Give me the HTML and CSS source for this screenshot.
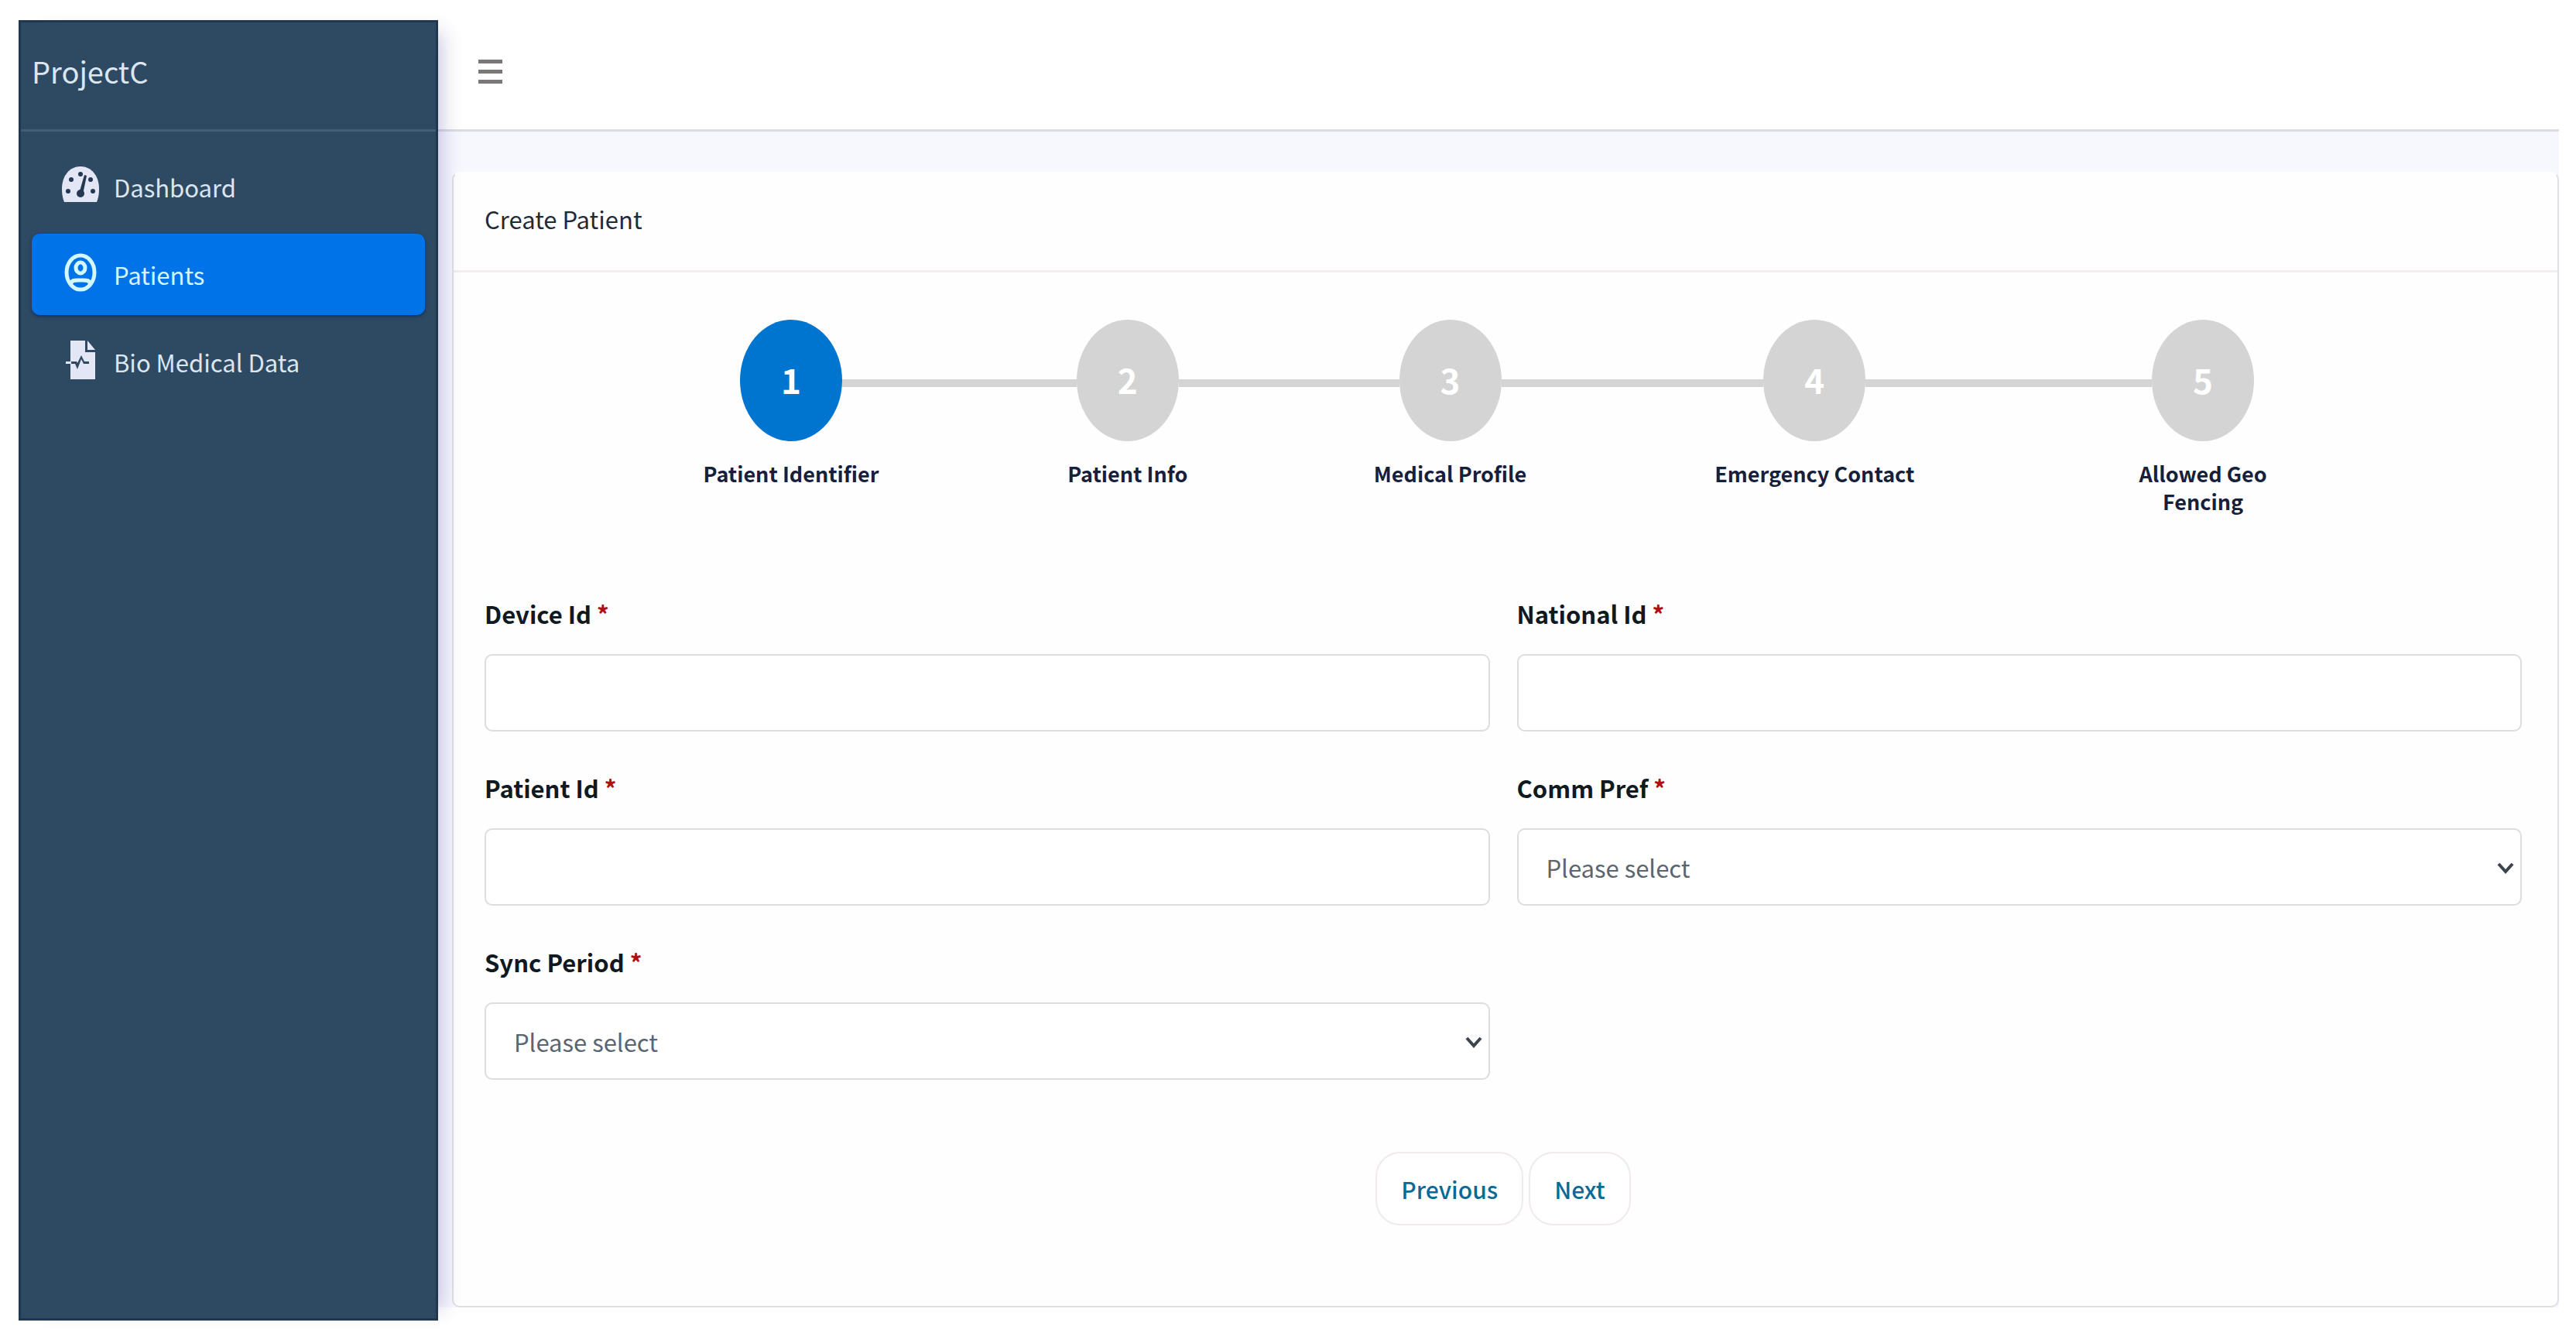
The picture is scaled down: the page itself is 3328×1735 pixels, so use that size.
FILE: index.html
```html
<!DOCTYPE html>
<html lang="en">
<head>
    <meta charset="UTF-8">
    <meta name="viewport" content="width=device-width, initial-scale=1.0">
    <title>ProjectC - Create Patient</title>
    <link rel="stylesheet" href="styles.css">
</head>
<body>
    <div class="wrapper">
        <aside class="sidebar">
            <a href="#" class="brand">ProjectC</a>
            <nav class="menu">
                <a href="#" class="menu-item">
                    <svg class="icon" viewBox="0 0 50 50" preserveAspectRatio="none" aria-hidden="true">
                        <path fill="#e3e6f5" d="M4 47C2 42 1 37 1 30C1 13 11 1 25 1s24 12 24 29c0 7-1 12-3 17z"/>
                        <g fill="#24384f">
                            <circle cx="25" cy="11" r="3"/>
                            <circle cx="13" cy="18" r="3"/>
                            <circle cx="38" cy="18" r="3"/>
                            <circle cx="9" cy="33" r="3"/>
                            <circle cx="41" cy="33" r="3"/>
                            <circle cx="25" cy="36" r="5"/>
                            <path d="M30 12l3 1-5 24-5-1z"/>
                        </g>
                    </svg>
                    <span>Dashboard</span>
                </a>
                <a href="#" class="menu-item active">
                    <svg class="icon" viewBox="0 0 50 50" preserveAspectRatio="none" aria-hidden="true">
                        <g fill="none" stroke="#d4f8ff" stroke-width="5">
                            <ellipse cx="25" cy="25" rx="18" ry="22"/>
                            <ellipse cx="25" cy="19" rx="6" ry="7"/>
                            <path d="M12 41c2-7 5-6 13-6s11-1 13 6"/>
                        </g>
                    </svg>
                    <span>Patients</span>
                </a>
                <a href="#" class="menu-item">
                    <svg class="icon" viewBox="0 0 50 50" preserveAspectRatio="none" aria-hidden="true">
                        <path fill="#e3e6f5" d="M12 0h19v15h13v35H12V30h6l3 7 5-13 3 6h7v-3h-6l-4-8-5 10-1-2h-8z"/>
                        <path fill="#e3e6f5" d="M34 0l10 12H34zM6 27h7v3H6z"/>
                    </svg>
                    <span>Bio Medical Data</span>
                </a>
            </nav>
        </aside>

        <div class="main">
            <header class="navbar">
                <button type="button" class="toggle" aria-label="Toggle menu">
                    <span></span>
                    <span></span>
                    <span></span>
                </button>
            </header>

            <main class="content">
                <section class="card">
                    <h1 class="card-header">Create Patient</h1>
                    <form class="card-body">
                        <div class="stepper">
                            <div class="step active">
                                <div class="circle">1</div>
                                <div class="step-label">Patient Identifier</div>
                            </div>
                            <div class="line line-1"></div>
                            <div class="step">
                                <div class="circle">2</div>
                                <div class="step-label">Patient Info</div>
                            </div>
                            <div class="line line-2"></div>
                            <div class="step">
                                <div class="circle">3</div>
                                <div class="step-label">Medical Profile</div>
                            </div>
                            <div class="line line-3"></div>
                            <div class="step">
                                <div class="circle">4</div>
                                <div class="step-label">Emergency Contact</div>
                            </div>
                            <div class="line line-4"></div>
                            <div class="step">
                                <div class="circle">5</div>
                                <div class="step-label">Allowed Geo<br>Fencing</div>
                            </div>
                        </div>

                        <div class="fields">
                            <div class="form-group">
                                <label for="device-id">Device Id <span class="required">*</span></label>
                                <input type="text" id="device-id" class="control">
                            </div>
                            <div class="form-group">
                                <label for="national-id">National Id <span class="required">*</span></label>
                                <input type="text" id="national-id" class="control">
                            </div>
                            <div class="form-group">
                                <label for="patient-id">Patient Id <span class="required">*</span></label>
                                <input type="text" id="patient-id" class="control">
                            </div>
                            <div class="form-group">
                                <label for="comm-pref">Comm Pref <span class="required">*</span></label>
                                <div class="select-box">
                                    <select id="comm-pref" class="control">
                                        <option>Please select</option>
                                    </select>
                                    <svg class="chevron" viewBox="0 0 22 16" aria-hidden="true"><path d="M2 2l9 10 9-10"/></svg>
                                </div>
                            </div>
                            <div class="form-group">
                                <label for="sync-period">Sync Period <span class="required">*</span></label>
                                <div class="select-box">
                                    <select id="sync-period" class="control">
                                        <option>Please select</option>
                                    </select>
                                    <svg class="chevron" viewBox="0 0 22 16" aria-hidden="true"><path d="M2 2l9 10 9-10"/></svg>
                                </div>
                            </div>
                        </div>

                        <div class="actions">
                            <button type="button" class="btn">Previous</button>
                            <button type="button" class="btn">Next</button>
                        </div>
                    </form>
                </section>
            </main>
        </div>
    </div>
</body>
</html>
```

FILE: styles.css
```css
* {
    box-sizing: border-box;
}
body {
    margin: 0;
    background-color: #fff;
    color: #1f2a37;
    font-family: "Noto Sans CJK SC", "Noto Sans", sans-serif;
    font-size: 31px;
    line-height: 40px;
}
.wrapper {
    display: flex;
    min-height: 100vh;
    padding: 26px 22px 29px 24px;
}

/* Sidebar */
.sidebar {
    position: relative;
    z-index: 1;
    width: 542px;
    flex-shrink: 0;
    background-color: #2e4a62;
    border: 3px solid #1f3850;
    box-shadow: 20px 0 24px -16px rgba(60, 60, 150, 0.3);
}
.brand {
    display: flex;
    align-items: center;
    height: 141px;
    padding: 0 14px 12px;
    border-bottom: 3px solid #435d76;
    color: #dbe6f2;
    font-size: 38px;
    text-decoration: none;
}
.menu {
    display: flex;
    flex-direction: column;
    gap: 8px;
    padding: 19px 14px;
}
.menu-item {
    display: flex;
    align-items: center;
    gap: 18px;
    height: 105px;
    padding: 0 38px;
    border-radius: 10px;
    color: #dbe6f2;
    text-decoration: none;
}
.menu-item.active {
    background-color: #0073e9;
    color: #d4f8ff;
    box-shadow: 0 2px 4px rgba(0, 20, 80, 0.5);
}
.icon {
    width: 50px;
    height: 50px;
    margin-bottom: 6px;
}

/* Top bar */
.main {
    flex: 1;
    display: flex;
    flex-direction: column;
    min-width: 0;
    padding-bottom: 17px;
}
.navbar {
    display: flex;
    align-items: center;
    height: 144px;
    padding: 0 52px;
    border-bottom: 3px solid #dcdce4;
}
.toggle {
    display: flex;
    flex-direction: column;
    gap: 8px;
    padding: 0;
    margin-bottom: 8px;
    border: none;
    background: none;
    cursor: pointer;
}
.toggle span {
    width: 31px;
    height: 5px;
    background-color: #7b7777;
}

/* Card */
.content {
    flex: 1;
    display: flex;
    padding: 52px 0 0 18px;
    background-color: #f7f7fe;
}
.card {
    flex: 1;
    background-color: #fefefe;
    border: 2px solid #dfdfe5;
    border-top-color: #fefefe;
    border-radius: 10px;
}
.card-header {
    display: flex;
    align-items: center;
    height: 128px;
    margin: 0;
    padding: 0 40px 8px;
    border-bottom: 3px solid #f1edf0;
    font-size: 31px;
    font-weight: 400;
}
.card-body {
    padding: 61px 46px 80px 40px;
}

/* Stepper */
.stepper {
    display: flex;
    padding: 0 346px 0 330px;
}
.step {
    display: flex;
    flex-direction: column;
    align-items: center;
    width: 132px;
    flex-shrink: 0;
}
.circle {
    display: flex;
    align-items: center;
    justify-content: center;
    width: 132px;
    height: 157px;
    padding-bottom: 4px;
    border-radius: 50%;
    background-color: #d4d4d4;
    color: #fff;
    font-size: 44px;
    font-weight: 700;
}
.step.active .circle {
    background-color: #0075cf;
}
.step-label {
    margin-top: 24px;
    color: #16203a;
    font-size: 27px;
    font-weight: 700;
    line-height: 36px;
    text-align: center;
    white-space: nowrap;
}
.line {
    height: 10px;
    margin-top: 77px;
    background-color: #d4d4d4;
}
.line-1 {
    flex: 303;
}
.line-2 {
    flex: 285;
}
.line-3 {
    flex: 339;
}
.line-4 {
    flex: 370;
}

/* Form */
.fields {
    display: grid;
    grid-template-columns: 1fr 1fr;
    gap: 53px 35px;
    margin-top: 107px;
}
label {
    display: block;
    margin-bottom: 32px;
    color: #101820;
    font-weight: 700;
}
.required {
    color: #b01010;
}
.control {
    display: block;
    width: 100%;
    height: 100px;
    padding: 0 36px;
    border: 2px solid #dcdddf;
    border-radius: 10px;
    background-color: #fff;
    color: #5b6570;
    font-family: inherit;
    font-size: 31px;
    appearance: none;
}
.select-box {
    position: relative;
}
.chevron {
    position: absolute;
    top: 44px;
    right: 10px;
    width: 22px;
    height: 16px;
    fill: none;
    stroke: #3c4450;
    stroke-width: 4;
    pointer-events: none;
}
.actions {
    display: flex;
    justify-content: center;
    gap: 7px;
    margin-top: 93px;
}
.btn {
    height: 95px;
    padding: 0 31px;
    border: 2px solid #f0eaee;
    border-radius: 32px;
    background-color: #fff;
    color: #0a6a94;
    font-family: inherit;
    font-size: 30px;
    font-weight: 500;
    cursor: pointer;
}
```
